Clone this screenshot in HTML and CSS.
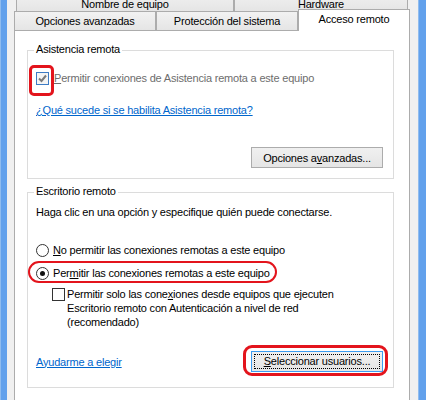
FILE: index.html
```html
<!DOCTYPE html>
<html lang="es">
<head>
    <meta charset="UTF-8">
    <meta name="viewport" content="width=device-width, initial-scale=1.0">
    <title>Propiedades del sistema - Acceso remoto</title>
    <link rel="stylesheet" href="styles.css">
</head>
<body>
    <div class="frame frame-left"></div>

    <div class="dialog">
        <div class="tab-row tab-row-back">
            <div class="tab tab-name">Nombre de equipo</div>
            <div class="tab tab-hardware">Hardware</div>
        </div>
        <div class="tab-row tab-row-front">
            <div class="tab tab-advanced">Opciones avanzadas</div>
            <div class="tab tab-protection">Protección del sistema</div>
            <div class="tab tab-remote selected">Acceso remoto</div>
        </div>

        <div class="panel">
            <!-- Asistencia remota -->
            <div class="group group-assist">
                <span class="legend">Asistencia remota</span>
                <div class="option option-assist">
                    <span class="checkbox checked">
                        <svg width="11" height="11" viewBox="0 0 11 11">
                            <path d="M2 5.5 L4.5 8 L9 2.5" fill="none" stroke="#7a7a7a" stroke-width="2"/>
                        </svg>
                    </span>
                    <span class="label disabled-text"><u>P</u>ermitir conexiones de Asistencia remota a este equipo</span>
                    <span class="highlight highlight-check"></span>
                </div>
                <a class="link link-assist" href="#">¿Qué sucede si se habilita Asistencia remota?</a>
                <div class="button-row">
                    <button class="button">Opciones a<u>v</u>anzadas...</button>
                </div>
            </div>

            <!-- Escritorio remoto -->
            <div class="group group-desktop">
                <span class="legend">Escritorio remoto</span>
                <div class="intro">Haga clic en una opción y especifique quién puede conectarse.</div>
                <div class="option option-deny">
                    <span class="radio"></span>
                    <span class="label"><u>N</u>o permitir las conexiones remotas a este equipo</span>
                </div>
                <div class="option option-allow">
                    <span class="radio checked"></span>
                    <span class="label">Per<u>m</u>itir las conexiones remotas a este equipo</span>
                    <span class="highlight highlight-radio"></span>
                </div>
                <div class="option option-nla">
                    <span class="checkbox"></span>
                    <span class="label">Permitir solo las cone<u>x</u>iones desde equipos que ejecuten<br>Escritorio remoto con Autenticación a nivel de red<br>(recomendado)</span>
                </div>
                <div class="bottom-row">
                    <a class="link" href="#">Ayudarme a elegir</a>
                    <span class="button-wrap">
                        <button class="button default"><span class="focus"><u>S</u>eleccionar usuarios...</span></button>
                        <span class="highlight highlight-button"></span>
                    </span>
                </div>
            </div>
        </div>
    </div>

    <div class="frame frame-right"></div>
</body>
</html>
```

FILE: styles.css
```css
body {
    margin: 0;
    display: flex;
    height: 400px;
    overflow: hidden;
    background-color: #f0f0f0;
    font-family: "Liberation Sans", Arial, sans-serif;
    font-size: 11px;
    letter-spacing: -0.2px;
    color: #000;
}

/* Blue window frame on both sides */
.frame {
    background-color: #62a1ec;
    border-left: 1px solid #8fbcef;
}

.frame-left {
    width: 6px;
}

.frame-right {
    width: 7px;
}

.dialog {
    flex: 1;
    padding: 0 8px 0 7px;
    display: flex;
    flex-direction: column;
}

/* Tabs */
.tab-row {
    display: flex;
}

.tab {
    box-sizing: border-box;
    border: 1px solid #acacac;
    border-bottom: none;
    background: linear-gradient(#f2f2f2, #e5e5e5);
    text-align: center;
    white-space: nowrap;
}

.tab-row-back {
    margin: -10px 2px 0;
    height: 21px;
}

.tab-row-back .tab {
    height: 21px;
    padding-top: 7px;
    line-height: 13px;
}

.tab-name {
    width: 218px;
}

.tab-hardware {
    width: 174px;
}

.tab-row-front {
    height: 19px;
    position: relative;
    z-index: 1;
}

.tab-row-front .tab {
    height: 19px;
    line-height: 18px;
}

.tab-advanced,
.tab-protection {
    width: 142px;
}

.tab-row-front .tab.selected {
    width: 112px;
    height: 22px;
    margin-top: -2px;
    background: #fff;
}

/* Tab page */
.panel {
    flex: none;
    height: 380px;
    border: 1px solid #acacac;
    background-color: #fff;
    padding: 19px 15px 0 12px;
}

.group {
    position: relative;
    border: 1px solid #dcdcdc;
}

.group-assist {
    padding: 0 10px 10px 8px;
}

.group-desktop {
    margin-top: 13px;
    padding: 11px 10px 15px 8px;
}

.legend {
    position: absolute;
    top: -9px;
    left: 6px;
    padding: 0 2px;
    background-color: #fff;
    line-height: 14px;
}

.option {
    position: relative;
    display: flex;
    align-items: center;
    height: 16px;
    white-space: nowrap;
}

.option-assist {
    margin-top: 19px;
}

.option-assist .checkbox {
    margin-right: 5px;
}

.option-deny {
    margin-top: 22px;
}

.option-allow {
    margin-top: 7px;
}

.option-nla {
    margin-top: 6px;
    height: auto;
    align-items: flex-start;
    padding-left: 16px;
    line-height: 14px;
}

.option-nla .checkbox {
    margin-top: 1px;
    margin-right: 2px;
}

.disabled-text {
    color: #6d6d6d;
}

.checkbox {
    box-sizing: border-box;
    width: 13px;
    height: 13px;
    border: 1px solid #333;
    background-color: #fff;
    display: flex;
    align-items: center;
    justify-content: center;
    flex: none;
}

.checkbox.checked {
    border-color: #3d7bc4;
    background-color: #f4f4f4;
}

.radio {
    box-sizing: border-box;
    width: 13px;
    height: 13px;
    border: 1px solid #333;
    border-radius: 50%;
    background-color: #fff;
    margin-right: 4px;
    display: flex;
    align-items: center;
    justify-content: center;
    flex: none;
}

.radio.checked::after {
    content: "";
    width: 5px;
    height: 5px;
    border-radius: 50%;
    background-color: #111;
}

.intro {
    line-height: 16px;
}

.link {
    color: #0066cc;
    text-decoration: underline;
    line-height: 16px;
}

.link-assist {
    display: block;
    margin-top: 16px;
}

.button-row {
    display: flex;
    justify-content: flex-end;
    margin-top: 29px;
}

.bottom-row {
    display: flex;
    justify-content: space-between;
    align-items: center;
    margin-top: 22px;
}

.button-wrap {
    position: relative;
    display: flex;
}

.button {
    box-sizing: border-box;
    width: 132px;
    height: 21px;
    padding: 0;
    border: 1px solid #acacac;
    background: linear-gradient(#f0f0f0, #e5e5e5);
    font-family: inherit;
    font-size: 11px;
    letter-spacing: -0.2px;
    color: #000;
}

.button.default {
    border-color: #3c9cf0;
    padding: 2px;
}

.button .focus {
    display: block;
    height: 100%;
    box-sizing: border-box;
    border: 1px dotted #000;
    line-height: 13px;
}

/* Red annotation marks */
.highlight {
    position: absolute;
    box-sizing: border-box;
    border: 3px solid #e3141c;
    pointer-events: none;
}

.highlight-check {
    left: -7px;
    top: -5px;
    width: 25px;
    height: 31px;
    border-radius: 5px;
}

.highlight-radio {
    left: -8px;
    top: -4px;
    width: 249px;
    height: 22px;
    border-width: 2px;
    border-radius: 11px;
}

.highlight-button {
    left: -8px;
    top: -6px;
    width: 145px;
    height: 31px;
    border-radius: 9px;
}
```
